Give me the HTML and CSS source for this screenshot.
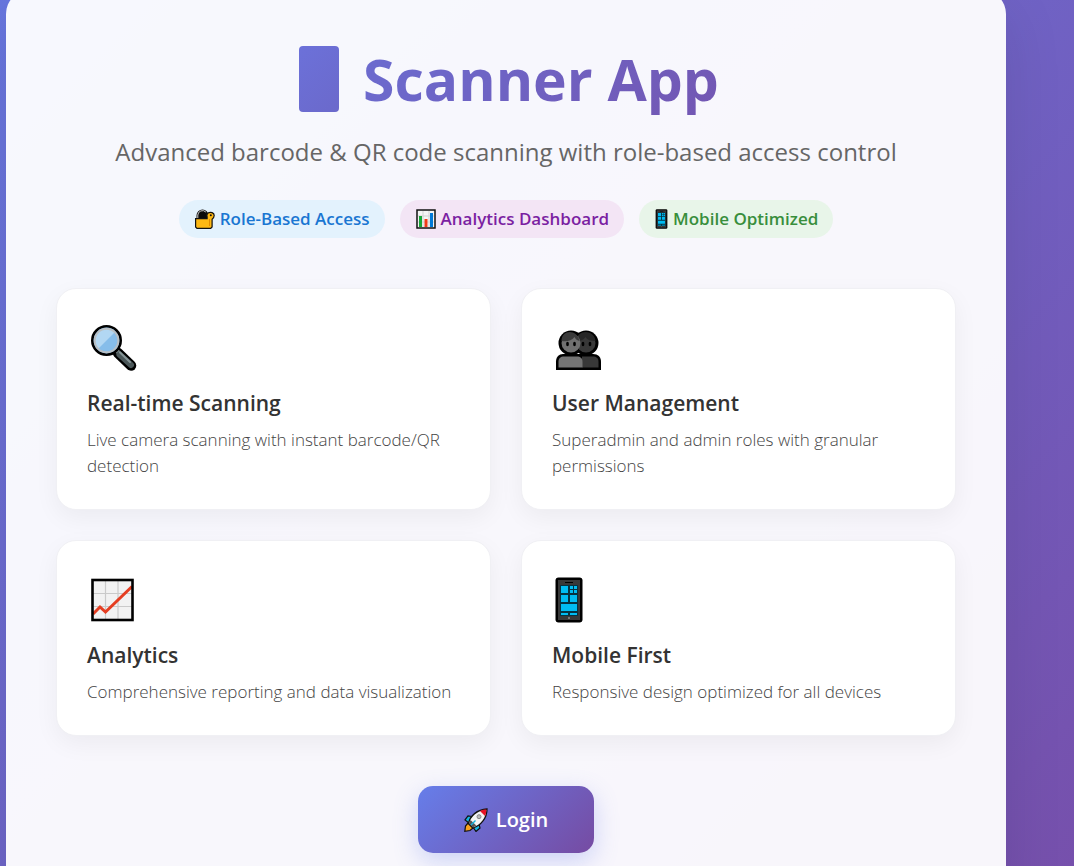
FILE: index.html
```html
<!DOCTYPE html>
<html lang="en">
<head>
  <meta charset="UTF-8">
  <meta name="viewport" content="width=device-width, initial-scale=1.0">
  <title>Scanner App</title>
  <link rel="stylesheet" href="styles.css">
</head>
<body>
  <svg class="symbols" aria-hidden="true">
    <symbol id="phone" viewBox="0 0 28 46">
      <rect x="0.5" y="0.5" width="27" height="45" rx="3" fill="#000"/>
      <rect x="3" y="3" width="22" height="40" fill="#383838"/>
      <rect x="10" y="5" width="8" height="1" fill="#000"/>
      <rect x="5" y="8" width="18" height="31" fill="#063241"/>
      <g fill="#00bcf2">
        <path d="M6 9h7v7H6zM6 18h7v7H6zM15 18h7v7h-7zM6 27h16v7H6zM6 36h7v2H6zM15 36h7v2h-7z"/>
        <path d="M15 9h3v3h-3zM19 9h3v3h-3zM15 13h3v3h-3zM19 13h3v3h-3z"/>
      </g>
      <circle cx="14" cy="41" r="1" fill="#888"/>
    </symbol>
  </svg>

  <main class="container">
    <header class="header">
      <h1 class="title"><span class="title-icon"></span><span class="title-text">Scanner App</span></h1>
      <p class="subtitle">Advanced barcode &amp; QR code scanning with role-based access control</p>
      <div class="badges">
        <span class="badge badge-role">
          <svg class="badge-icon" viewBox="0 0 20 20" aria-hidden="true">
            <path d="M2.500 10V6.500a5 5 0 0 1 10 0V10z" fill="#0a0a0a" stroke="#111" stroke-width="2"/>
            <path d="M2.800 9V6a4.700 4.700 0 0 1 8-3" fill="none" stroke="#ccc" stroke-width="1"/>
            <path d="M.6 9.600h11.500V8A3.600 3.600 0 0 1 13 4c2.500-1.500 6.300-.5 6.200 2.600-.1 2-1 3-2.100 3.700v7.600L15.700 19.400H2L.6 18z" fill="#fdb813" stroke="#111" stroke-width="1.200"/>
            <path d="M14.500 10v7" stroke="#e08a00" stroke-width="1"/>
            <circle cx="15.800" cy="6.200" r="1" fill="#111"/>
          </svg>
          Role-Based Access
        </span>
        <span class="badge badge-analytics">
          <svg class="badge-icon" viewBox="0 0 20 20" aria-hidden="true">
            <rect x="1" y="1" width="18" height="18" fill="#f4f4f4" stroke="#111" stroke-width="1.500"/>
            <path d="M2 7h16M2 13h16M7 2v16M13 2v16" stroke="#d2d2d2" stroke-width="1"/>
            <path d="M3 7h3v11H3z" fill="#16a637"/>
            <path d="M8.500 10h3v8h-3z" fill="#f03a17"/>
            <path d="M14 4h3v14h-3z" fill="#0078d7"/>
          </svg>
          Analytics Dashboard
        </span>
        <span class="badge badge-mobile">
          <svg class="badge-icon badge-phone" aria-hidden="true"><use href="#phone"/></svg>
          Mobile Optimized
        </span>
      </div>
    </header>

    <section class="features">
      <article class="card">
        <svg class="card-icon" viewBox="0 0 48 48" aria-hidden="true">
          <path d="M28 29l13 12.500" stroke="#000" stroke-width="10.500" stroke-linecap="round"/>
          <path d="M25 25l5 5" stroke="#8b9798" stroke-width="4"/>
          <path d="M29.500 30.500l11.500 10.500" stroke="#4b5759" stroke-width="6" stroke-linecap="round"/>
          <path d="M30 28.500l10 9.500" stroke="#859496" stroke-width="2" stroke-linecap="round"/>
          <circle cx="16.500" cy="16.500" r="14.200" fill="#86bdea" stroke="#000" stroke-width="2.600"/>
          <path d="M8 25A12 12 0 0 1 25 8z" fill="#b2d7f3"/>
          <circle cx="16.500" cy="16.500" r="11.800" fill="none" stroke="#b9bfc3" stroke-width="2"/>
        </svg>
        <h2 class="card-title">Real-time Scanning</h2>
        <p class="card-text">Live camera scanning with instant barcode/QR detection</p>
      </article>

      <article class="card">
        <svg class="card-icon" viewBox="0 0 48 48" aria-hidden="true">
          <path d="M1 46V37.500C1 33 4 30 8 30h30c5 0 8 3 8 7.500V46z" fill="#000"/>
          <circle cx="31" cy="19" r="12.500" fill="#000"/>
          <circle cx="16" cy="19" r="12.500" fill="#000"/>
          <path d="M27 43.500V32.500h11c3.500 0 5.500 2 5.500 5v6z" fill="#383838"/>
          <path d="M3.500 43.500v-6c0-3 2-5 5.500-5h13c3.500 0 5.500 2 5.500 5v6z" fill="#747474"/>
          <circle cx="31" cy="19" r="9.500" fill="#383838"/>
          <path d="M21.500 17c0-12 18-12 19 0-5 0-8-1-10-4-2 3-5 4-9 4z" fill="#262626"/>
          <circle cx="16" cy="19" r="9.500" fill="#707070"/>
          <path d="M6.500 17c0-12 16-12 18 0-3-1-4-2-5-4-3 4-8 5-13 4z" fill="#3a3a3a"/>
          <g fill="#000">
            <ellipse cx="12.500" cy="20" rx="1.400" ry="2.200"/>
            <ellipse cx="19.500" cy="20" rx="1.400" ry="2.200"/>
            <ellipse cx="28" cy="20" rx="1.400" ry="2.200"/>
            <ellipse cx="35" cy="20" rx="1.400" ry="2.200"/>
          </g>
        </svg>
        <h2 class="card-title">User Management</h2>
        <p class="card-text">Superadmin and admin roles with granular permissions</p>
      </article>

      <article class="card">
        <svg class="card-icon" viewBox="0 0 48 48" aria-hidden="true">
          <rect x="2.200" y="4.200" width="40" height="39.500" fill="#f2f2f2"/>
          <path d="M3 17.500h39M3 30.500h39M15.500 5v38M28 5v38" stroke="#cacaca" stroke-width="1.200"/>
          <path d="M3 38l7-7 5.500 5L42 10.500" fill="none" stroke="#e53e22" stroke-width="3"/>
          <rect x="2.500" y="4" width="40" height="40" fill="none" stroke="#000" stroke-width="2.600"/>
        </svg>
        <h2 class="card-title">Analytics</h2>
        <p class="card-text">Comprehensive reporting and data visualization</p>
      </article>

      <article class="card">
        <svg class="card-icon card-phone" aria-hidden="true"><use href="#phone"/></svg>
        <h2 class="card-title">Mobile First</h2>
        <p class="card-text">Responsive design optimized for all devices</p>
      </article>
    </section>

    <div class="actions">
      <button type="button" class="login">
        <svg class="login-icon" viewBox="0 0 24 24" aria-hidden="true">
          <path d="M8 8.500L4 8 1 12l4 3zM15 16l1 4-4 3.500L9 19z" fill="#14b4e0" stroke="#111" stroke-width="1.200"/>
          <path d="M4 15l5 5-3 2.500-5.200.8L1.500 18z" fill="#f9a11b" stroke="#111" stroke-width="1.200"/>
          <path d="M4.500 15.500C6 8 13 1.500 23 1c0 9-6 16.500-14 19z" fill="#f4f4f4" stroke="#111" stroke-width="1.300"/>
          <path d="M16 2.900C18.500 1.800 20.500 1.600 22.400 1.600c0 2-.3 4.300-1.400 6.500z" fill="#e81224"/>
          <path d="M4.900 15.500l1.600-3.500 5.800 5.500-3.300 1.900z" fill="#555"/>
          <path d="M11.500 12.500L7 17" stroke="#14b4e0" stroke-width="1.500"/>
          <circle cx="15" cy="8.700" r="2" fill="#bbb" stroke="#888"/>
        </svg>
        Login
      </button>
    </div>
  </main>
</body>
</html>
```
FILE: styles.css
```css
* {
  box-sizing: border-box;
  margin: 0;
  padding: 0;
}
html {
  height: 100%;
  overflow: hidden;
}
body {
  font-family: "Segoe UI", "Open Sans", "Noto Sans", sans-serif;
  background: linear-gradient(135deg, #6877e0 0%, #7650ac 100%);
  height: 100%;
  padding: 0 68px 0 6px;
  overflow: hidden;
}
.symbols {
  position: absolute;
  width: 0;
  height: 0;
}
.container {
  margin-top: -10px;
  padding: 50px;
  background: rgba(255, 255, 255, 0.95);
  border-radius: 24px;
  box-shadow: 0 20px 60px rgba(0, 0, 0, 0.1);
}
.header {
  text-align: center;
  margin-bottom: 50px;
}
.title {
  display: flex;
  justify-content: center;
  align-items: center;
  gap: 24px;
  margin-bottom: 18px;
  padding-left: 6px;
  font-size: 57px;
  font-weight: 700;
  line-height: 78px;
}
.title-icon {
  width: 40px;
  height: 66px;
  border-radius: 4px;
  background: linear-gradient(135deg, #6c71d9, #6b69cb);
}
.title-text {
  background: linear-gradient(135deg, #6b6cd0, #7356b2);
  -webkit-background-clip: text;
  background-clip: text;
  color: transparent;
}
.subtitle {
  margin-bottom: 32px;
  color: #666;
  font-size: 24px;
  line-height: 32px;
}
.badges {
  display: flex;
  flex-wrap: wrap;
  justify-content: center;
  gap: 15px;
}
.badge {
  display: flex;
  align-items: center;
  gap: 5px;
  padding: 7px 15px 7px 16px;
  border-radius: 20px;
  font-size: 17px;
  font-weight: 600;
  line-height: 24px;
}
.badge-role {
  background: #e3f2fd;
  color: #1976d2;
}
.badge-analytics {
  background: #f3e5f5;
  color: #7b1fa2;
}
.badge-mobile {
  background: #e8f5e9;
  color: #388e3c;
}
.badge-icon {
  width: 20px;
  height: 20px;
}
.badge-phone {
  width: 13px;
}
.features {
  display: grid;
  grid-template-columns: 1fr 1fr;
  gap: 30px;
  margin-bottom: 50px;
}
.card {
  padding: 30px;
  background: #fff;
  border: 1px solid #f0f0f4;
  border-radius: 20px;
  box-shadow: 0 8px 24px rgba(0, 0, 0, 0.05);
}
.card-icon {
  display: block;
  width: 48px;
  height: 48px;
  margin: 5px 0 16px 3px;
}
.card-phone {
  width: 28px;
}
.card-title {
  margin-bottom: 9px;
  color: #333;
  font-size: 21px;
  font-weight: 600;
  line-height: 30px;
}
.card-text {
  color: #444;
  font-size: 17px;
  font-weight: 300;
  line-height: 26px;
}
.actions {
  display: flex;
  justify-content: center;
}
.login {
  display: flex;
  align-items: center;
  gap: 8px;
  padding: 20px 46px;
  border: none;
  border-radius: 15px;
  background: linear-gradient(135deg, #667eea 0%, #764ba2 100%);
  box-shadow: 0 8px 24px rgba(102, 126, 234, 0.3);
  color: #fff;
  font-family: inherit;
  font-size: 20px;
  font-weight: 600;
  line-height: 27px;
  cursor: pointer;
}
.login-icon {
  width: 24px;
  height: 24px;
}
```
